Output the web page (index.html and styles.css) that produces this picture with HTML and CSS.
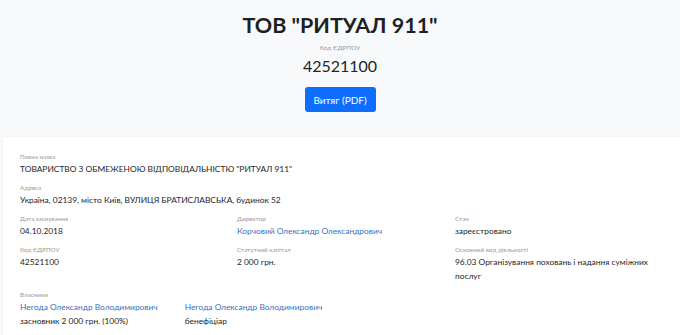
FILE: index.html
```html
<!DOCTYPE html>
<html lang="uk">
<head>
<meta charset="utf-8">
<title>ТОВ "РИТУАЛ 911"</title>
<link rel="stylesheet" href="styles.css">
</head>
<body>
<header class="hero">
  <h1 class="hero-title">ТОВ "РИТУАЛ 911"</h1>
  <div class="hero-label">Код ЄДРПОУ</div>
  <div class="hero-code">42521100</div>
  <a class="btn" href="#">Витяг (PDF)</a>
</header>
<main class="card">
  <div class="field">
    <div class="label">Повна назва</div>
    <div class="value">ТОВАРИСТВО З ОБМЕЖЕНОЮ ВІДПОВІДАЛЬНІСТЮ "РИТУАЛ 911"</div>
  </div>
  <div class="field">
    <div class="label">Адреса</div>
    <div class="value">Україна, 02139, місто Київ, ВУЛИЦЯ БРАТИСЛАВСЬКА, будинок 52</div>
  </div>
  <div class="grid">
    <div class="field">
      <div class="label">Дата заснування</div>
      <div class="value">04.10.2018</div>
    </div>
    <div class="field">
      <div class="label">Директор</div>
      <div class="value"><a class="link" href="#">Корчовий Олександр Олександрович</a></div>
    </div>
    <div class="field">
      <div class="label">Стан</div>
      <div class="value">зареєстровано</div>
    </div>
    <div class="field">
      <div class="label">Код ЄДРПОУ</div>
      <div class="value">42521100</div>
    </div>
    <div class="field">
      <div class="label">Статутний капітал</div>
      <div class="value">2 000 грн.</div>
    </div>
    <div class="field">
      <div class="label">Основний вид діяльності</div>
      <div class="value">96.03 Організування поховань і надання суміжних послуг</div>
    </div>
  </div>
  <div class="field">
    <div class="label">Власники</div>
    <div class="owners">
      <div class="owner">
        <a class="link" href="#">Негода Олександр Володимирович</a>
        <div class="value">засновник 2 000 грн. (100%)</div>
      </div>
      <div class="owner">
        <a class="link" href="#">Негода Олександр Володимирович</a>
        <div class="value">бенефіціар</div>
      </div>
    </div>
  </div>
</main>
</body>
</html>
```
FILE: styles.css
```css
html, body {
  margin: 0;
  padding: 0;
}
body {
  background: #f8f9fa;
  font-family: "Lato", "Open Sans", sans-serif;
  color: #212529;
}
.hero {
  display: flex;
  flex-direction: column;
  align-items: center;
  padding: 10px 0 25px;
}
.hero-title {
  margin: 0;
  font-size: 21.5px;
  line-height: 30px;
  font-weight: 700;
  color: #1d1f22;
}
.hero-label {
  margin-top: 3px;
  font-size: 6.5px;
  line-height: 10px;
  color: #9a9a9a;
}
.hero-code {
  margin-top: 2px;
  font-size: 16px;
  line-height: 22px;
  color: #212529;
}
.btn {
  margin-top: 10px;
  width: 71px;
  height: 25px;
  box-sizing: border-box;
  display: flex;
  align-items: center;
  justify-content: center;
  background: #0d6efd;
  color: #fff;
  border-radius: 3px;
  font-size: 10px;
  text-decoration: none;
}
.card {
  background: #fff;
  margin: 0 0 0 3px;
  padding: 14px 20px 10px 17px;
  min-height: 190px;
  box-shadow: 0 0 2px rgba(0,0,0,0.06);
}
.field {
  margin-bottom: 6px;
}
.label {
  font-size: 6.3px;
  line-height: 11px;
  color: #9a9a9a;
}
.value {
  font-size: 8.4px;
  line-height: 14px;
  color: #212529;
}
.link {
  font-size: 8.4px;
  line-height: 14px;
  color: #3a6fc4;
  text-decoration: none;
}
.grid {
  display: grid;
  grid-template-columns: 217px 218px 205px;
}
.owners {
  display: flex;
  gap: 27px;
}
.owner {
  display: flex;
  flex-direction: column;
}
```
